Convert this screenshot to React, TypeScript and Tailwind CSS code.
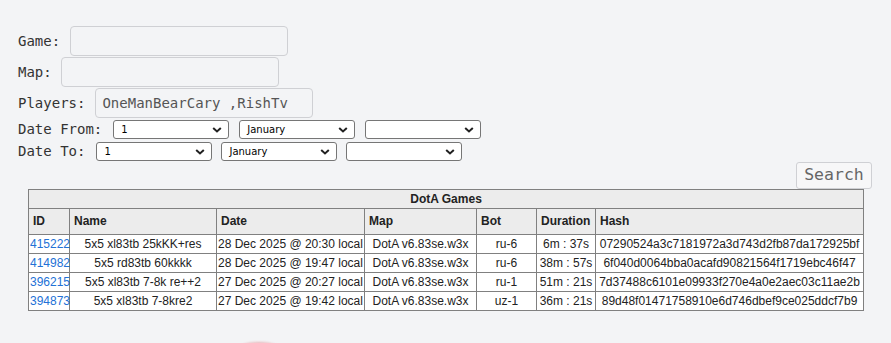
import React from "react";

const rows = [
  { id: "415222", name: "5x5 xl83tb 25kKK+res", date: "28 Dec 2025 @ 20:30 local", map: "DotA v6.83se.w3x", bot: "ru-6", dur: "6m : 37s", hash: "07290524a3c7181972a3d743d2fb87da172925bf" },
  { id: "414982", name: "5x5 rd83tb 60kkkk", date: "28 Dec 2025 @ 19:47 local", map: "DotA v6.83se.w3x", bot: "ru-6", dur: "38m : 57s", hash: "6f040d0064bba0acafd90821564f1719ebc46f47" },
  { id: "396215", name: "5x5 xl83tb 7-8k re++2", date: "27 Dec 2025 @ 20:27 local", map: "DotA v6.83se.w3x", bot: "ru-1", dur: "51m : 21s", hash: "7d37488c6101e09933f270e4a0e2aec03c11ae2b" },
  { id: "394873", name: "5x5 xl83tb 7-8kre2", date: "27 Dec 2025 @ 19:42 local", map: "DotA v6.83se.w3x", bot: "uz-1", dur: "36m : 21s", hash: "89d48f01471758910e6d746dbef9ce025ddcf7b9" },
];

function Chevron() {
  return (
    <svg width="10" height="7" viewBox="0 0 10 7" className="absolute right-[6px] top-1/2 -translate-y-1/2">
      <path d="M1.2 1.5 L5 5 L8.8 1.5" fill="none" stroke="#222" strokeWidth="2" />
    </svg>
  );
}

function Sel({ value }: { value: string }) {
  return (
    <div className="relative w-[116px] h-[19px] bg-white border border-[#767676] rounded-[3px] flex items-center pl-[7px] text-[10px] text-black" style={{ fontFamily: "'DejaVu Sans', sans-serif" }}>
      <span>{value}</span>
      <Chevron />
    </div>
  );
}

function Input({ value }: { value?: string }) {
  return (
    <div className="w-[218px] h-[30px] border border-[#cfd0d4] rounded-[4px] flex items-center pl-[6px] text-[#555]">
      {value}
    </div>
  );
}

export default function App() {
  const mono = { fontFamily: "'DejaVu Sans Mono', monospace" };
  return (
    <div className="w-[891px] h-[343px] bg-[#f3f4f6] overflow-hidden relative text-[14px] text-[#333]" style={mono}>
      <div className="pl-[18px] pt-[26px]">
        <div className="flex items-center h-[30px] mb-[1px]">
          <span className="mr-[10px]">Game:</span>
          <Input />
        </div>
        <div className="flex items-center h-[30px] mb-[1px]">
          <span className="mr-[9px]">Map:</span>
          <Input />
        </div>
        <div className="flex items-center h-[30px] mb-[1px]">
          <span className="mr-[10px]">Players:</span>
          <Input value="OneManBearCary ,RishTv" />
        </div>
        <div className="flex items-center h-[21px] mt-[1px]">
          <span className="mr-[11px]">Date From:</span>
          <div className="flex gap-[10px]">
            <Sel value="1" />
            <Sel value="January" />
            <Sel value="" />
          </div>
        </div>
        <div className="flex items-center h-[21px] mt-[1px]">
          <span className="mr-[11px]">Date To:</span>
          <div className="flex gap-[9px]">
            <Sel value="1" />
            <Sel value="January" />
            <Sel value="" />
          </div>
        </div>
      </div>
      <div className="flex justify-end pr-[19px]">
        <div className="w-[76px] h-[27px] border border-[#cfd0d4] rounded-[3px] bg-[#f7f7f8] flex items-center justify-center text-[16.5px] text-[#666]">
          Search
        </div>
      </div>
      <div className="px-[28px]">
        <table className="table-fixed border-collapse w-[835px] text-[12px] text-[#222]" style={{ fontFamily: "'Liberation Sans', Arial, sans-serif" }}>
          <colgroup>
            <col className="w-[41px]" />
            <col className="w-[147px]" />
            <col className="w-[148px]" />
            <col className="w-[112px]" />
            <col className="w-[60px]" />
            <col className="w-[59px]" />
            <col className="w-[268px]" />
          </colgroup>
          <thead>
            <tr>
              <th colSpan={7} className="border border-[#808080] bg-[#ececec] font-bold text-center leading-[14px] py-[2px]">DotA Games</th>
            </tr>
            <tr>
              {["ID", "Name", "Date", "Map", "Bot", "Duration", "Hash"].map((h) => (
                <th key={h} className="border border-[#808080] bg-[#ececec] font-bold text-left leading-[15px] py-[5px] px-[4px] whitespace-nowrap">{h}</th>
              ))}
            </tr>
          </thead>
          <tbody>
            {rows.map((r) => (
              <tr key={r.id} className="bg-white">
                <td className="border border-[#808080] leading-[14px] py-[2px] px-[1px] text-left whitespace-nowrap">
                  <a className="text-[#2271d6]">{r.id}</a>
                </td>
                <td className="border border-[#808080] leading-[14px] py-[2px] px-[1px] text-center whitespace-nowrap">{r.name}</td>
                <td className="border border-[#808080] leading-[14px] py-[2px] px-[1px] text-center whitespace-nowrap">{r.date}</td>
                <td className="border border-[#808080] leading-[14px] py-[2px] px-[1px] text-center whitespace-nowrap">{r.map}</td>
                <td className="border border-[#808080] leading-[14px] py-[2px] px-[1px] text-center whitespace-nowrap">{r.bot}</td>
                <td className="border border-[#808080] leading-[14px] py-[2px] px-[1px] text-center whitespace-nowrap">{r.dur}</td>
                <td className="border border-[#808080] leading-[14px] py-[2px] px-[1px] text-center whitespace-nowrap">{r.hash}</td>
              </tr>
            ))}
          </tbody>
        </table>
      </div>
      <div className="ml-[235px] mt-[31px] w-[48px] h-[20px] rounded-[50%] bg-[#e7b7bb] blur-[1px]" />
    </div>
  );
}
